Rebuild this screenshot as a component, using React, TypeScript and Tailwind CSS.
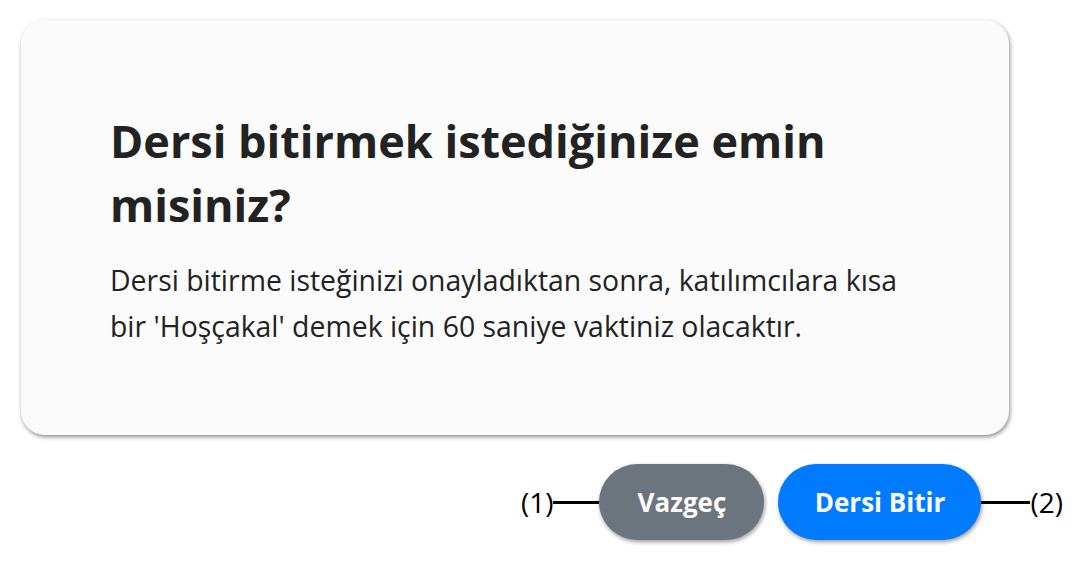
import React from "react";

const fontStack = { fontFamily: "'Open Sans', 'Noto Sans', sans-serif" };

const Connector = ({ label, side }: { label: string; side: "left" | "right" }) => (
  <div className="flex items-center">
    {side === "right" && <div className="h-[3px] w-[49px] bg-black" />}
    <span className="text-[28px] leading-none text-black">{label}</span>
    {side === "left" && <div className="h-[3px] w-[46px] bg-black" />}
  </div>
);

export default function App() {
  return (
    <div
      className="w-[1076px] h-[563px] bg-white pl-[21px] pt-[20px] text-[#222]"
      style={fontStack}
    >
      {/* dialog card */}
      <div className="w-[988px] h-[415px] rounded-[24px] bg-[#fbfbfb] shadow-[1px_2px_4px_rgba(0,0,0,0.45)] pl-[89px] pt-[89px]">
        <div className="max-w-[815px]">
          <h1 className="text-[45px] leading-[64px] font-bold">
            Dersi bitirmek istediğinize emin misiniz?
          </h1>
          <p className="mt-[20px] text-[28.4px] leading-[46px]">
            Dersi bitirme isteğinizi onayladıktan sonra, katılımcılara kısa bir
            'Hoşçakal' demek için 60 saniye vaktiniz olacaktır.
          </p>
        </div>
      </div>

      {/* actions */}
      <div className="mt-[29px] flex items-center justify-end pr-[13px]">
        <Connector label="(1)" side="left" />
        <button className="h-[76px] w-[165px] rounded-full bg-[#6c757d] text-[26px] font-bold text-white shadow-[1px_2px_4px_rgba(0,0,0,0.4)]">
          Vazgeç
        </button>
        <button className="ml-[14px] h-[76px] w-[203px] rounded-full bg-[#007bff] text-[26px] font-bold text-white shadow-[1px_2px_4px_rgba(0,0,0,0.4)]">
          Dersi Bitir
        </button>
        <Connector label="(2)" side="right" />
      </div>
    </div>
  );
}
